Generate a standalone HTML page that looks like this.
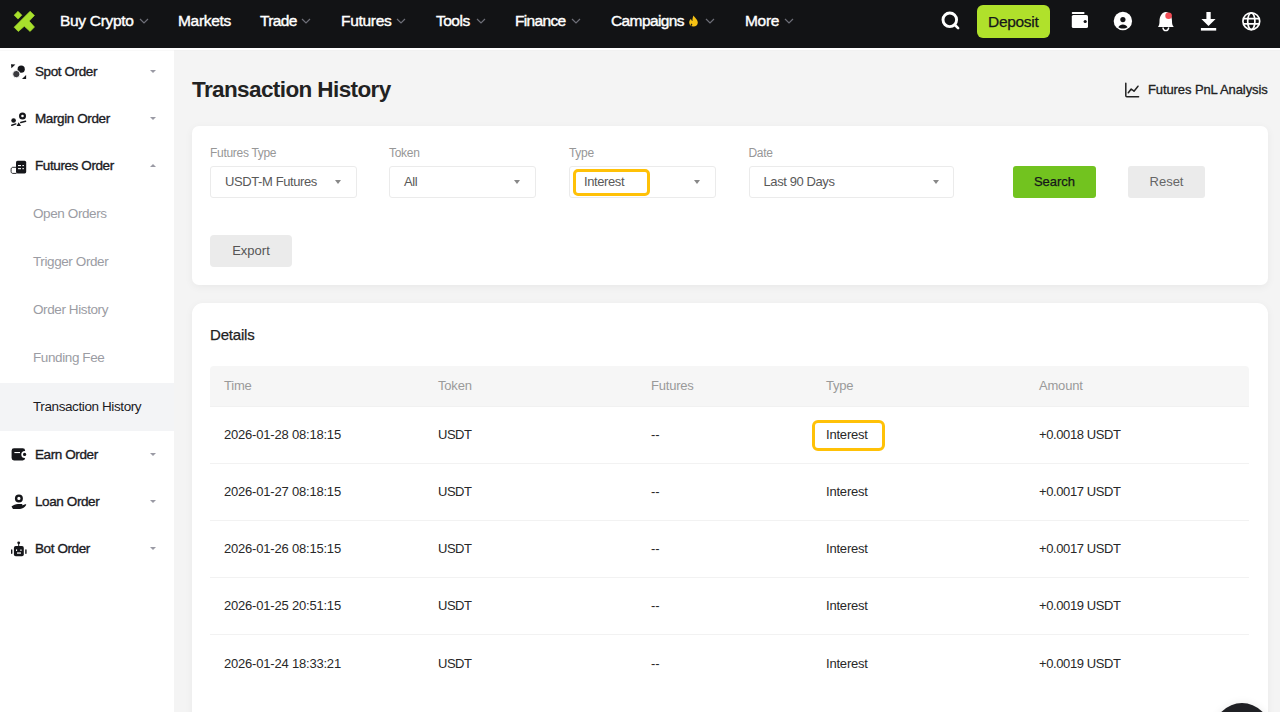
<!DOCTYPE html>
<html><head><meta charset="utf-8">
<style>
*{margin:0;padding:0;box-sizing:border-box}
html,body{width:1280px;height:712px;overflow:hidden;background:#f4f4f4;font-family:"Liberation Sans",sans-serif;}
.a{position:absolute;white-space:nowrap}
#nav{position:absolute;left:0;top:0;width:1280px;height:48px;background:#121315}
.ni{position:absolute;top:12px;font-size:15.5px;line-height:18px;letter-spacing:-0.3px;color:#fff;-webkit-text-stroke:0.4px #fff}
.chev{position:absolute;top:18px;width:10px;height:6px}
#side{position:absolute;left:0;top:48px;width:174px;height:664px;background:#fff}
.si{position:absolute;left:35px;font-size:13.5px;line-height:16px;letter-spacing:-0.4px;color:#1b1b1f;-webkit-text-stroke:0.35px #1b1b1f}
.ss{position:absolute;left:33px;font-size:13.5px;line-height:16px;letter-spacing:-0.4px;color:#9b9ca3}
.caret{position:absolute;left:149.8px;width:0;height:0;border-left:3.8px solid transparent;border-right:3.8px solid transparent}
.card{position:absolute;left:192px;width:1075.5px;background:#fff;border-radius:7px;box-shadow:0 2px 8px rgba(0,0,0,0.05)}
.lbl{position:absolute;font-size:12px;line-height:14px;letter-spacing:-0.3px;color:#979797}
.sel{position:absolute;top:166px;height:32px;border:1px solid #ebebeb;border-radius:3px;background:#fff}
.selt{position:absolute;top:7px;left:14px;font-size:13px;line-height:16px;letter-spacing:-0.4px;color:#595959}
.selc{position:absolute;top:13px;width:0;height:0;border-left:3.8px solid transparent;border-right:3.8px solid transparent;border-top:4.2px solid #888}
.th{position:absolute;top:378px;font-size:13px;line-height:16px;letter-spacing:-0.2px;color:#9a9a9a}
.td{position:absolute;font-size:13px;line-height:16px;letter-spacing:-0.2px;color:#282828}
.rl{position:absolute;left:210px;width:1039px;height:1px;background:#f2f2f2}
</style></head><body>
<div id="nav">
  <svg class="a" style="left:0;top:0" width="40" height="40" viewBox="0 0 40 40">
    <g fill="#a8e02c" stroke="#a8e02c" stroke-width="0.6" stroke-linejoin="round">
      <path d="M18 11.3 L21.9 15.2 L18 19.1 L14.1 15.2Z"/>
      <path d="M30.1 11.2 L34.5 15.4 L29.2 21.1 L34.5 27 L30.1 31.5 L24.3 26.3 L18.3 31.5 L14.1 27.2Z"/>
    </g>
  </svg>
  <div class="ni" style="left:60px">Buy Crypto</div>
  <div class="ni" style="left:178px">Markets</div>
  <div class="ni" style="left:260px;letter-spacing:-0.65px">Trade</div>
  <div class="ni" style="left:341px">Futures</div>
  <div class="ni" style="left:436px;letter-spacing:-0.5px">Tools</div>
  <div class="ni" style="left:515px;letter-spacing:-0.65px">Finance</div>
  <div class="ni" style="left:611px;letter-spacing:-0.6px">Campaigns</div>
  <div class="ni" style="left:745px">More</div>
  <svg class="chev" style="left:138.5px" viewBox="0 0 10 6"><path d="M1 1 L5 5 L9 1" fill="none" stroke="#6e6f78" stroke-width="1.2"/></svg>
  <svg class="chev" style="left:301px" viewBox="0 0 10 6"><path d="M1 1 L5 5 L9 1" fill="none" stroke="#6e6f78" stroke-width="1.2"/></svg>
  <svg class="chev" style="left:396px" viewBox="0 0 10 6"><path d="M1 1 L5 5 L9 1" fill="none" stroke="#6e6f78" stroke-width="1.2"/></svg>
  <svg class="chev" style="left:475.5px" viewBox="0 0 10 6"><path d="M1 1 L5 5 L9 1" fill="none" stroke="#6e6f78" stroke-width="1.2"/></svg>
  <svg class="chev" style="left:571px" viewBox="0 0 10 6"><path d="M1 1 L5 5 L9 1" fill="none" stroke="#6e6f78" stroke-width="1.2"/></svg>
  <svg class="chev" style="left:705px" viewBox="0 0 10 6"><path d="M1 1 L5 5 L9 1" fill="none" stroke="#6e6f78" stroke-width="1.2"/></svg>
  <svg class="chev" style="left:783.5px" viewBox="0 0 10 6"><path d="M1 1 L5 5 L9 1" fill="none" stroke="#6e6f78" stroke-width="1.2"/></svg>
  <svg class="a" style="left:688px;top:15px" width="11" height="12" viewBox="0 0 11 12">
    <path d="M5.5 0.5 C6.5 2.5 9.8 4.5 9.8 7.5 C9.8 10 8 11.5 5.5 11.5 C3 11.5 1.2 10 1.2 7.5 C1.2 5.8 2.2 4.6 3 3.8 C3.2 5 3.8 5.8 4.5 6 C4.3 3.8 4.8 2 5.5 0.5Z" fill="#f6c214"/>
    <path d="M3.2 11 C2.6 10.2 2.6 9 3.4 8.2 C3.6 9.2 4.2 9.6 4.6 9.6 C4.2 10.2 3.8 10.7 3.2 11Z" fill="#121315"/>
  </svg>
  <!-- search -->
  <svg class="a" style="left:940px;top:10px" width="22" height="22" viewBox="0 0 22 22">
    <circle cx="9.8" cy="9.8" r="6.8" fill="none" stroke="#fff" stroke-width="2.9"/>
    <path d="M15 15 L18.1 18.1" stroke="#fff" stroke-width="2.6" stroke-linecap="round"/>
  </svg>
  <div class="a" style="left:977px;top:5px;width:73px;height:33px;background:#b0e12b;border-radius:6px"></div>
  <div class="ni" style="left:988px;top:12.5px;color:#15161a;-webkit-text-stroke:0.25px #15161a">Deposit</div>
  <!-- wallet -->
  <svg class="a" style="left:1070px;top:10px" width="20" height="20" viewBox="0 0 20 20">
    <rect x="1.8" y="2" width="12.7" height="2.1" rx="0.8" fill="#fff"/>
    <rect x="1.8" y="5" width="16.2" height="13" rx="1.6" fill="#fff"/>
    <circle cx="15.2" cy="11.5" r="1.6" fill="#131417"/>
  </svg>
  <!-- user -->
  <svg class="a" style="left:1112px;top:10px" width="22" height="22" viewBox="0 0 22 22">
    <circle cx="10.9" cy="11" r="9.2" fill="#fff"/>
    <circle cx="10.9" cy="9.6" r="2.6" fill="#131417"/>
    <path d="M6.3 17.3 C7.3 15.3 9 14.4 10.9 14.4 C12.8 14.4 14.5 15.3 15.5 17.3 C14.3 18.1 12.7 18.6 10.9 18.6 C9.1 18.6 7.5 18.1 6.3 17.3Z" fill="#131417"/>
  </svg>
  <!-- bell -->
  <svg class="a" style="left:1155px;top:10px" width="22" height="22" viewBox="0 0 22 22">
    <path d="M3.2 16.5 C4.3 15 4.5 13.8 4.5 11 C4.5 6.3 7.3 2 10.8 2 C14.3 2 17 6.3 17 11 C17 13.8 17.3 15 18.5 16.5 L18.5 17 L3.2 17Z" fill="#fff"/>
    <path d="M7.8 17.5 C8.2 19.5 9.3 20.6 10.8 20.6 C12.3 20.6 13.4 19.5 13.8 17.5" fill="none" stroke="#fff" stroke-width="1.4"/>
    <circle cx="13.6" cy="5.8" r="3.3" fill="#f24d56"/>
  </svg>
  <!-- download -->
  <svg class="a" style="left:1198px;top:10px" width="20" height="22" viewBox="0 0 20 22">
    <path d="M8.4 2 L12.7 2 L12.7 9 L17.6 9 L10.5 16 L3.4 9 L8.4 9Z" fill="#fff"/>
    <rect x="2.9" y="18" width="15.3" height="2.6" fill="#fff"/>
  </svg>
  <!-- globe -->
  <svg class="a" style="left:1240px;top:10px" width="22" height="22" viewBox="0 0 22 22">
    <g fill="none" stroke="#fff" stroke-width="1.7">
      <circle cx="11.3" cy="11.2" r="8.4"/>
      <ellipse cx="11.3" cy="11.2" rx="3.6" ry="8.4"/>
      <path d="M3.2 8.6 H19.4 M3.2 13.8 H19.4"/>
    </g>
  </svg>
</div>

<div id="side">
</div>
<div class="a" style="left:0;top:48px;width:1280px;height:2px;background:#fff"></div>
<div class="a" style="left:0;top:50px;width:1280px;height:1px;background:#f9f9f9"></div>
<div class="a" style="left:174px;top:50px;width:1106px;height:1px;background:#f1f1f1"></div>
<div class="a" style="left:0;top:383px;width:174px;height:48px;background:#f3f4f6"></div>

<!-- sidebar items -->
<div class="si" style="top:63.5px">Spot Order</div>
<div class="si" style="top:110.5px">Margin Order</div>
<div class="si" style="top:157.5px">Futures Order</div>
<div class="ss" style="top:205.5px">Open Orders</div>
<div class="ss" style="top:253.5px">Trigger Order</div>
<div class="ss" style="top:301.5px">Order History</div>
<div class="ss" style="top:349.5px">Funding Fee</div>
<div class="ss" style="top:398.5px;color:#1b1b1f">Transaction History</div>
<div class="si" style="top:446.5px">Earn Order</div>
<div class="si" style="top:493.5px">Loan Order</div>
<div class="si" style="top:540.5px">Bot Order</div>
<div class="caret" style="top:69.5px;border-top:3.8px solid #9a9aa4"></div>
<div class="caret" style="top:116.5px;border-top:3.8px solid #9a9aa4"></div>
<div class="caret" style="top:164.4px;border-bottom:3.8px solid #9a9aa4"></div>
<div class="caret" style="top:452.5px;border-top:3.8px solid #9a9aa4"></div>
<div class="caret" style="top:499.5px;border-top:3.8px solid #9a9aa4"></div>
<div class="caret" style="top:546.5px;border-top:3.8px solid #9a9aa4"></div>

<!-- sidebar icons -->
<svg class="a" style="left:0;top:48px" width="40" height="540" viewBox="0 48 40 540">
  <g fill="#15161a">
    <!-- spot -->
    <path d="M11 64.3 L15.4 64.6 L11.4 68.3Z"/>
    <circle cx="21.2" cy="69.2" r="3.6"/>
    <circle cx="16.3" cy="74.1" r="3.65" fill="#3a3a3e" stroke="#fff" stroke-width="0.9"/>
    <path d="M22 78.9 L26.1 78.9 L26.1 75Z"/>
    <!-- margin -->
    <circle cx="22.5" cy="116" r="2.4" fill="none" stroke="#15161a" stroke-width="2.2"/>
    <circle cx="13.6" cy="120.5" r="2.3"/>
    <path d="M11.8 125.3 L15.8 123.9" stroke="#15161a" stroke-width="1.5" stroke-linecap="round"/>
    <path d="M16.6 126 L18.7 122.3 L21 126Z"/>
    <path d="M20.8 122.5 L25.6 121.2" stroke="#15161a" stroke-width="1.5" stroke-linecap="round"/>
    <!-- futures -->
    <rect x="16" y="160.8" width="10.2" height="12.6" rx="1.6"/>
    <path d="M16 167.3 L12.8 167.3 C11.7 167.3 11.1 168.3 11.1 169.6 L11.1 171.5 C11.1 172.6 11.8 173.4 12.9 173.4 L16.5 173.4" fill="none" stroke="#15161a" stroke-width="0.9"/>
    <rect x="18" y="165" width="3" height="1.1" fill="#fff"/>
    <rect x="22.4" y="165" width="1.5" height="1.1" fill="#fff"/>
    <rect x="18" y="168.1" width="3" height="1.1" fill="#fff"/>
    <rect x="22.4" y="168.1" width="1.5" height="1.1" fill="#fff"/>
    <!-- earn -->
    <rect x="11.6" y="448.3" width="13.5" height="12.2" rx="2.4"/>
    <circle cx="24.8" cy="454.4" r="3.5" fill="#fff"/>
    <circle cx="24.6" cy="454.4" r="1.6"/>
    <rect x="14.4" y="452" width="5.6" height="1.1" fill="#fff"/>
    <!-- loan -->
    <circle cx="18.9" cy="498.4" r="2.8" fill="none" stroke="#15161a" stroke-width="2.4"/>
    <path d="M11.5 506.5 C13.5 505 15.5 504 18 504 L22 504 C22.5 504 22.5 505.2 22 505.2 L19.5 505.3 L22.7 505.3 L25.2 504.2 C26 503.9 26.5 504.6 26 505.2 C24.5 507.3 23 508.7 20 508.9 L13 509 Z"/>
    <!-- bot -->
    <circle cx="18.7" cy="542.8" r="1.4"/>
    <rect x="18.2" y="543" width="1" height="3.5"/>
    <rect x="13.9" y="546.1" width="9.9" height="10.1" rx="1.8"/>
    <rect x="11" y="549.2" width="1.4" height="4.8" rx="0.7"/>
    <rect x="25.2" y="549.2" width="1.4" height="4.8" rx="0.7"/>
    <rect x="16" y="549.4" width="1.1" height="1.6" fill="#fff"/>
    <rect x="20.4" y="549.4" width="1.1" height="1.6" fill="#fff"/>
    <rect x="17" y="552.4" width="4" height="1.3" fill="#fff"/>
  </g>
</svg>

<!-- main title -->
<div class="a" style="left:192px;top:77px;font-size:22.5px;line-height:26px;font-weight:bold;letter-spacing:-0.6px;color:#222">Transaction History</div>
<svg class="a" style="left:1124px;top:82px" width="16" height="16" viewBox="0 0 16 16">
  <path d="M1.8 1.2 V13.8 Q1.8 14.8 2.8 14.8 H14.6" fill="none" stroke="#222" stroke-width="1.5" stroke-linecap="round"/>
  <path d="M4.3 10.8 L7.2 7 L10 9.2 L14 4.2" fill="none" stroke="#222" stroke-width="1.5" stroke-linejoin="round" stroke-linecap="round"/>
</svg>
<div class="a" style="left:1148px;top:82px;font-size:13px;line-height:16px;letter-spacing:-0.1px;color:#222;-webkit-text-stroke:0.3px #222">Futures PnL Analysis</div>

<!-- filter card -->
<div class="card" style="top:126px;height:159px"></div>
<div class="lbl" style="left:210px;top:146px">Futures Type</div>
<div class="lbl" style="left:389px;top:146px">Token</div>
<div class="lbl" style="left:569px;top:146px">Type</div>
<div class="lbl" style="left:748.5px;top:146px">Date</div>
<div class="sel" style="left:210px;width:147px"><div class="selt">USDT-M Futures</div><div class="selc" style="left:124px"></div></div>
<div class="sel" style="left:389px;width:147px"><div class="selt">All</div><div class="selc" style="left:124px"></div></div>
<div class="sel" style="left:569px;width:147px"><div class="selt">Interest</div><div class="selc" style="left:124px"></div></div>
<div class="sel" style="left:748.5px;width:205.5px"><div class="selt">Last 90 Days</div><div class="selc" style="left:183px"></div></div>
<div class="a" style="left:572.5px;top:168.5px;width:77px;height:27px;border:3.4px solid #ffc107;border-radius:5px"></div>
<div class="a" style="left:1013px;top:166px;width:83px;height:32px;background:#72c31f;border-radius:3px;font-size:13px;line-height:32px;text-align:center;color:#15161a;-webkit-text-stroke:0.25px #15161a">Search</div>
<div class="a" style="left:1128px;top:166px;width:77px;height:32px;background:#ebebeb;border-radius:3px;font-size:13px;line-height:32px;text-align:center;color:#666">Reset</div>
<div class="a" style="left:210px;top:235px;width:82px;height:32px;background:#ebebeb;border-radius:4px;font-size:13px;line-height:32px;text-align:center;color:#555">Export</div>

<!-- details card -->
<div class="card" style="top:302.5px;height:420px;border-radius:11px"></div>
<div class="a" style="left:210px;top:326px;font-size:15px;line-height:18px;letter-spacing:-0.2px;color:#222;-webkit-text-stroke:0.25px #222">Details</div>
<div class="a" style="left:210px;top:366px;width:1039px;height:40px;background:#f6f6f6;border-radius:4px 4px 0 0"></div>
<div class="rl" style="top:406px;background:#f1f1f1"></div>
<div class="th" style="left:224px">Time</div>
<div class="th" style="left:438px">Token</div>
<div class="th" style="left:651px">Futures</div>
<div class="th" style="left:826px">Type</div>
<div class="th" style="left:1039px">Amount</div>

<div id="rows"></div>
<div class="rl" style="top:463px"></div>
<div class="rl" style="top:520px"></div>
<div class="rl" style="top:577px"></div>
<div class="rl" style="top:634px"></div>

<div class="td" style="left:224px;top:427px">2026-01-28 08:18:15</div>
<div class="td" style="left:438px;top:427px;letter-spacing:-0.5px">USDT</div>
<div class="td" style="left:651px;top:427px">--</div>
<div class="td" style="left:826px;top:427px">Interest</div>
<div class="td" style="left:1039px;top:427px;letter-spacing:-0.4px">+0.0018 USDT</div>

<div class="td" style="left:224px;top:484px">2026-01-27 08:18:15</div>
<div class="td" style="left:438px;top:484px;letter-spacing:-0.5px">USDT</div>
<div class="td" style="left:651px;top:484px">--</div>
<div class="td" style="left:826px;top:484px">Interest</div>
<div class="td" style="left:1039px;top:484px;letter-spacing:-0.4px">+0.0017 USDT</div>

<div class="td" style="left:224px;top:541px">2026-01-26 08:15:15</div>
<div class="td" style="left:438px;top:541px;letter-spacing:-0.5px">USDT</div>
<div class="td" style="left:651px;top:541px">--</div>
<div class="td" style="left:826px;top:541px">Interest</div>
<div class="td" style="left:1039px;top:541px;letter-spacing:-0.4px">+0.0017 USDT</div>

<div class="td" style="left:224px;top:598px">2026-01-25 20:51:15</div>
<div class="td" style="left:438px;top:598px;letter-spacing:-0.5px">USDT</div>
<div class="td" style="left:651px;top:598px">--</div>
<div class="td" style="left:826px;top:598px">Interest</div>
<div class="td" style="left:1039px;top:598px;letter-spacing:-0.4px">+0.0019 USDT</div>

<div class="td" style="left:224px;top:656px">2026-01-24 18:33:21</div>
<div class="td" style="left:438px;top:656px;letter-spacing:-0.5px">USDT</div>
<div class="td" style="left:651px;top:656px">--</div>
<div class="td" style="left:826px;top:656px">Interest</div>
<div class="td" style="left:1039px;top:656px;letter-spacing:-0.4px">+0.0019 USDT</div>

<div class="a" style="left:811.5px;top:420px;width:73.5px;height:30.5px;border:3.5px solid #ffc107;border-radius:6px"></div>

<!-- floating circle -->
<div class="a" style="left:1214px;top:703px;width:56px;height:56px;border-radius:50%;background:#1f2024;box-shadow:0 0 8px rgba(0,0,0,0.08)"></div>
</body></html>
